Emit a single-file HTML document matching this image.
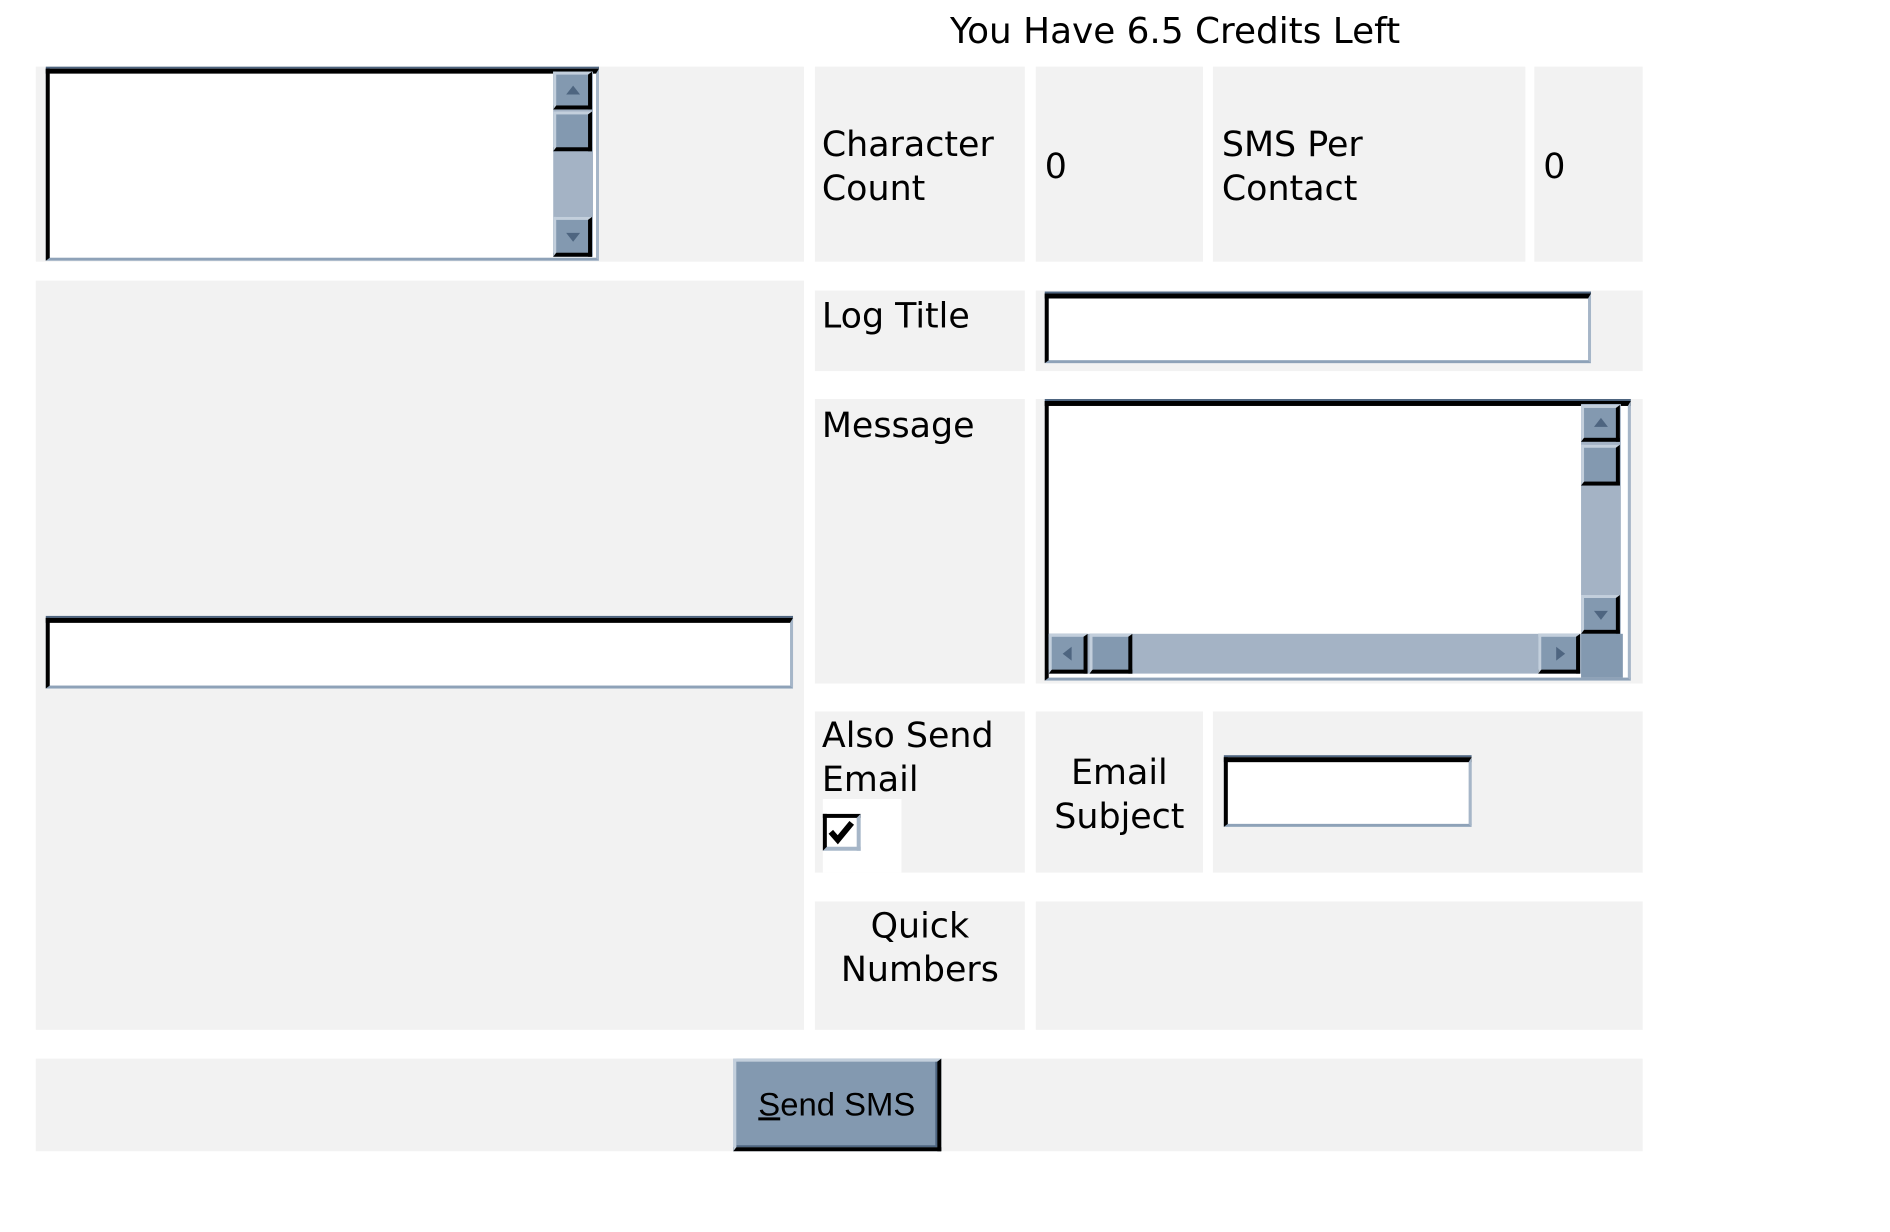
<!DOCTYPE html>
<html><head><meta charset="utf-8">
<style>
*{margin:0;padding:0;box-sizing:border-box}
body{width:1890px;height:1232px;background:#fff;position:relative;overflow:hidden;font-family:"DejaVu Sans","Liberation Sans",sans-serif;font-size:35px;line-height:44px;color:#000}
#w{position:absolute;left:0;top:0;width:1890px;height:1232px;transform:scale(0.995);transform-origin:0 0}
.a{position:absolute}
.c{position:absolute;background:#f2f2f2}
.t{position:absolute;white-space:nowrap}
.box{position:absolute;background:#fff;border-top:5px solid #000;border-left:4px solid #000;border-right:3px solid #a6b6c8;border-bottom:3px solid #8ea2b8;box-shadow:0 -2px 0 #4e6580}
.btn{position:absolute;background:#8399b0;border-top:3px solid #c3cfdc;border-left:3px solid #c3cfdc;border-right:4px solid #000;border-bottom:4px solid #000}
.trk{position:absolute;background:#a4b3c5}
.up,.dn,.lf,.rt{position:absolute;width:0;height:0}
</style></head><body><div id="w">
<div class="t" style="left:941px;top:10px;width:480px;text-align:center;font-size:36px">You Have 6.5 Credits Left</div>

<div class="c" style="left:36px;top:67px;width:772px;height:196px"></div>
<div class="box" style="left:46px;top:69px;width:556px;height:193px"></div>
<div class="trk" style="left:556px;top:72px;width:40px;height:186px"></div>
<div class="btn" style="left:556px;top:72px;width:39px;height:38px"></div>
<div class="up" style="left:569px;top:86px;border-left:7px solid transparent;border-right:7px solid transparent;border-bottom:9px solid #4e6580"></div>
<div class="btn" style="left:556px;top:112px;width:39px;height:40px"></div>
<div class="btn" style="left:556px;top:218px;width:39px;height:40px"></div>
<div class="dn" style="left:569px;top:234px;border-left:7px solid transparent;border-right:7px solid transparent;border-top:9px solid #4e6580"></div>

<div class="c" style="left:819px;top:67px;width:211px;height:196px"></div>
<div class="t" style="left:826px;top:124px">Character<br>Count</div>
<div class="c" style="left:1041px;top:67px;width:168px;height:196px"></div>
<div class="t" style="left:1050px;top:146px">0</div>
<div class="c" style="left:1219px;top:67px;width:314px;height:196px"></div>
<div class="t" style="left:1228px;top:124px">SMS Per<br>Contact</div>
<div class="c" style="left:1542px;top:67px;width:109px;height:196px"></div>
<div class="t" style="left:1551px;top:146px">0</div>

<div class="c" style="left:36px;top:282px;width:772px;height:753px"></div>
<div class="box" style="left:46px;top:621px;width:751px;height:71px"></div>

<div class="c" style="left:819px;top:292px;width:211px;height:81px"></div>
<div class="t" style="left:826px;top:296px">Log Title</div>
<div class="c" style="left:1041px;top:292px;width:610px;height:81px"></div>
<div class="box" style="left:1050px;top:295px;width:549px;height:70px"></div>

<div class="c" style="left:819px;top:401px;width:211px;height:286px"></div>
<div class="t" style="left:826px;top:406px">Message</div>
<div class="c" style="left:1041px;top:401px;width:610px;height:286px"></div>
<div class="box" style="left:1050px;top:403px;width:589px;height:281px"></div>
<div class="trk" style="left:1589px;top:406px;width:40px;height:232px"></div>
<div class="btn" style="left:1589px;top:407px;width:39px;height:37px"></div>
<div class="up" style="left:1602px;top:420px;border-left:7px solid transparent;border-right:7px solid transparent;border-bottom:9px solid #4e6580"></div>
<div class="btn" style="left:1589px;top:447px;width:39px;height:41px"></div>
<div class="btn" style="left:1589px;top:598px;width:39px;height:39px"></div>
<div class="dn" style="left:1602px;top:614px;border-left:7px solid transparent;border-right:7px solid transparent;border-top:9px solid #4e6580"></div>
<div class="trk" style="left:1054px;top:637px;width:535px;height:40px"></div>
<div class="btn" style="left:1054px;top:637px;width:39px;height:40px"></div>
<div class="lf" style="left:1068px;top:650px;border-top:7px solid transparent;border-bottom:7px solid transparent;border-right:9px solid #4e6580"></div>
<div class="btn" style="left:1095px;top:637px;width:43px;height:40px"></div>
<div class="btn" style="left:1546px;top:637px;width:42px;height:40px"></div>
<div class="rt" style="left:1564px;top:650px;border-top:7px solid transparent;border-bottom:7px solid transparent;border-left:9px solid #4e6580"></div>
<div class="a" style="left:1589px;top:637px;width:42px;height:44px;background:#8399b0"></div>

<div class="c" style="left:819px;top:715px;width:211px;height:162px"></div>
<div class="t" style="left:826px;top:718px">Also Send<br>Email</div>
<div class="a" style="left:827px;top:803px;width:79px;height:74px;background:#fff"></div>
<div class="a" style="left:827px;top:818px;width:38px;height:37px;background:#fff;border-top:4px solid #000;border-left:4px solid #000;border-right:4px solid #a6b6c8;border-bottom:4px solid #a6b6c8"></div>
<svg class="a" style="left:831px;top:822px" width="30" height="29" viewBox="0 0 30 29"><path d="M4 14 L11 22 L25 5" fill="none" stroke="#000" stroke-width="6"/></svg>
<div class="c" style="left:1041px;top:715px;width:168px;height:162px"></div>
<div class="t" style="left:1041px;top:755px;width:168px;text-align:center;white-space:normal">Email<br>Subject</div>
<div class="c" style="left:1219px;top:715px;width:432px;height:162px"></div>
<div class="box" style="left:1230px;top:761px;width:249px;height:70px"></div>

<div class="c" style="left:819px;top:906px;width:211px;height:129px"></div>
<div class="t" style="left:819px;top:909px;width:211px;text-align:center">Quick<br>Numbers</div>
<div class="c" style="left:1041px;top:906px;width:610px;height:129px"></div>

<div class="c" style="left:36px;top:1064px;width:1615px;height:93px"></div>
<div class="btn" style="left:737px;top:1064px;width:209px;height:93px;font-family:'Liberation Sans',Arial,sans-serif;font-size:33px;line-height:86px;text-align:center;box-shadow:inset -2px -2px 0 #4e6580"><span style="text-decoration:underline">S</span>end SMS</div>
</div></body></html>
